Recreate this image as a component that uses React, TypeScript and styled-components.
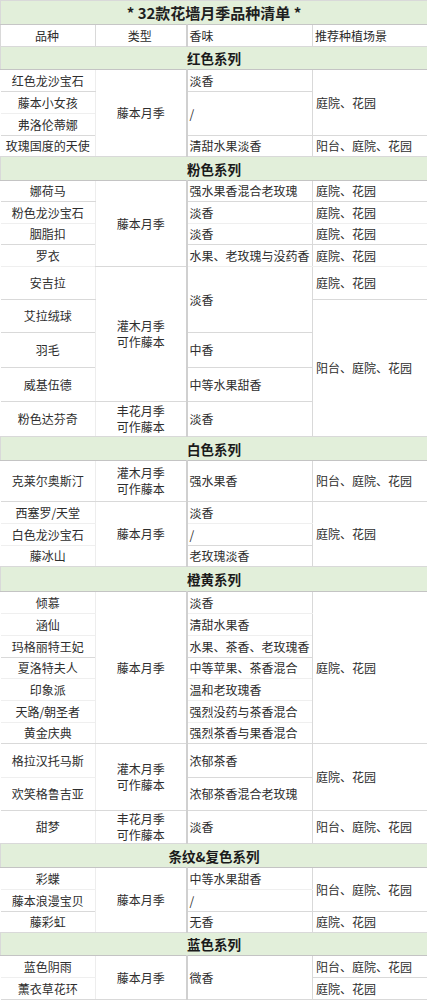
import React from "react";
import styled, { createGlobalStyle } from "styled-components";

const Global = createGlobalStyle`
  html, body { margin: 0; padding: 0; background: #ffffff; }
  body { font-family: "Noto Sans CJK SC", "Noto Sans", sans-serif; }
`;

const Sheet = styled.table`
  width: 427px;
  table-layout: fixed;
  border-collapse: collapse;
  font-size: 12px;
  color: #2e2e2e;
  font-family: "Noto Sans CJK SC", "Noto Sans", sans-serif;
`;

const Row = styled.tr<{ $h: number }>`
  height: ${(p) => p.$h}px;
`;

const baseCell = `
  padding: 0 2px;
  vertical-align: middle;
  white-space: nowrap;
  overflow: hidden;
  line-height: 16px;
  border: 1px solid #d9d9d9;
`;

const TitleCell = styled.td`
  ${baseCell}
  background: #e2efda;
  text-align: center;
  font-size: 15px;
  font-weight: 700;
  color: #1f1f1f;
  border-bottom: 1px solid #c6c6c6;
`;

const HeadCell = styled.td<{ $left?: boolean; $strong?: boolean }>`
  ${baseCell}
  text-align: ${(p) => (p.$left ? "left" : "center")};
  padding-left: ${(p) => (p.$left ? "2px" : "0")};
  ${(p) => (p.$strong ? "border-left: 2px solid #d0d0d0;" : "")}
  color: #2b2b2b;
`;

const SectionCell = styled.td`
  ${baseCell}
  background: #e2efda;
  text-align: center;
  font-size: 13.5px;
  font-weight: 700;
  color: #1a1a1a;
  border-top: 1px solid #c4c4c4;
  border-bottom: 1px solid #c4c4c4;
`;

const NameCell = styled.td<{ $faint?: boolean }>`
  ${baseCell}
  text-align: center;
  border-left: none;
  border-right: 1px solid #ededed;
  ${(p) => (p.$faint ? "border-bottom-color: #efefef;" : "")}
`;

const TypeCell = styled.td`
  ${baseCell}
  text-align: center;
  line-height: 16px;
  border-left: 1px solid #ededed;
`;

const ScentCell = styled.td<{ $faint?: boolean }>`
  ${baseCell}
  text-align: left;
  border-left: 2px solid #d0d0d0;
  ${(p) => (p.$faint ? "border-bottom-color: #efefef;" : "")}
`;

const SceneCell = styled.td<{ $faint?: boolean }>`
  ${baseCell}
  text-align: left;
  padding-left: 3px;
  border-right: none;
  ${(p) => (p.$faint ? "border-bottom-color: #efefef;" : "")}
`;

const TwoLine = ({ a, b }: { a: string; b: string }) => (
  <>
    {a}
    <br />
    {b}
  </>
);

const Section = ({ h, label }: { h: number; label: string }) => (
  <Row $h={h}>
    <SectionCell colSpan={4}>{label}</SectionCell>
  </Row>
);

export default function App() {
  return (
    <>
      <Global />
      <Sheet>
        <colgroup>
          <col style={{ width: 95 }} />
          <col style={{ width: 91 }} />
          <col style={{ width: 126 }} />
          <col style={{ width: 115 }} />
        </colgroup>
        <tbody>
          <Row $h={24}>
            <TitleCell colSpan={4}>* 32款花墙月季品种清单 *</TitleCell>
          </Row>
          <Row $h={22}>
            <HeadCell>品种</HeadCell>
            <HeadCell>类型</HeadCell>
            <HeadCell $left $strong>香味</HeadCell>
            <HeadCell $left>推荐种植场景</HeadCell>
          </Row>

          <Section h={23} label="红色系列" />
          <Row $h={22}>
            <NameCell>红色龙沙宝石</NameCell>
            <TypeCell rowSpan={4}>藤本月季</TypeCell>
            <ScentCell>淡香</ScentCell>
            <SceneCell rowSpan={3}>庭院、花园</SceneCell>
          </Row>
          <Row $h={22}>
            <NameCell $faint>藤本小女孩</NameCell>
            <ScentCell rowSpan={2}>/</ScentCell>
          </Row>
          <Row $h={22}>
            <NameCell>弗洛伦蒂娜</NameCell>
          </Row>
          <Row $h={21}>
            <NameCell>玫瑰国度的天使</NameCell>
            <ScentCell>清甜水果淡香</ScentCell>
            <SceneCell>阳台、庭院、花园</SceneCell>
          </Row>

          <Section h={24} label="粉色系列" />
          <Row $h={21}>
            <NameCell>娜荷马</NameCell>
            <TypeCell rowSpan={4}>藤本月季</TypeCell>
            <ScentCell>强水果香混合老玫瑰</ScentCell>
            <SceneCell>庭院、花园</SceneCell>
          </Row>
          <Row $h={22}>
            <NameCell $faint>粉色龙沙宝石</NameCell>
            <ScentCell $faint>淡香</ScentCell>
            <SceneCell $faint>庭院、花园</SceneCell>
          </Row>
          <Row $h={21}>
            <NameCell>胭脂扣</NameCell>
            <ScentCell>淡香</ScentCell>
            <SceneCell>庭院、花园</SceneCell>
          </Row>
          <Row $h={22}>
            <NameCell $faint>罗衣</NameCell>
            <ScentCell $faint>水果、老玫瑰与没药香</ScentCell>
            <SceneCell $faint>庭院、花园</SceneCell>
          </Row>
          <Row $h={33}>
            <NameCell>安吉拉</NameCell>
            <TypeCell rowSpan={4}>
              <TwoLine a="灌木月季" b="可作藤本" />
            </TypeCell>
            <ScentCell rowSpan={2}>淡香</ScentCell>
            <SceneCell>庭院、花园</SceneCell>
          </Row>
          <Row $h={33}>
            <NameCell>艾拉绒球</NameCell>
            <SceneCell rowSpan={4}>阳台、庭院、花园</SceneCell>
          </Row>
          <Row $h={35}>
            <NameCell>羽毛</NameCell>
            <ScentCell>中香</ScentCell>
          </Row>
          <Row $h={34}>
            <NameCell>威基伍德</NameCell>
            <ScentCell>中等水果甜香</ScentCell>
          </Row>
          <Row $h={35}>
            <NameCell>粉色达芬奇</NameCell>
            <TypeCell>
              <TwoLine a="丰花月季" b="可作藤本" />
            </TypeCell>
            <ScentCell>淡香</ScentCell>
          </Row>

          <Section h={24} label="白色系列" />
          <Row $h={41}>
            <NameCell>克莱尔奥斯汀</NameCell>
            <TypeCell>
              <TwoLine a="灌木月季" b="可作藤本" />
            </TypeCell>
            <ScentCell>强水果香</ScentCell>
            <SceneCell>阳台、庭院、花园</SceneCell>
          </Row>
          <Row $h={22}>
            <NameCell $faint>西塞罗/天堂</NameCell>
            <TypeCell rowSpan={3}>藤本月季</TypeCell>
            <ScentCell $faint>淡香</ScentCell>
            <SceneCell rowSpan={3}>庭院、花园</SceneCell>
          </Row>
          <Row $h={22}>
            <NameCell $faint>白色龙沙宝石</NameCell>
            <ScentCell>/</ScentCell>
          </Row>
          <Row $h={21}>
            <NameCell>藤冰山</NameCell>
            <ScentCell>老玫瑰淡香</ScentCell>
          </Row>

          <Section h={25} label="橙黄系列" />
          <Row $h={22}>
            <NameCell $faint>倾慕</NameCell>
            <TypeCell rowSpan={7}>藤本月季</TypeCell>
            <ScentCell $faint>淡香</ScentCell>
            <SceneCell rowSpan={7}>庭院、花园</SceneCell>
          </Row>
          <Row $h={22}>
            <NameCell $faint>涵仙</NameCell>
            <ScentCell $faint>清甜水果香</ScentCell>
          </Row>
          <Row $h={22}>
            <NameCell>玛格丽特王妃</NameCell>
            <ScentCell>水果、茶香、老玫瑰香</ScentCell>
          </Row>
          <Row $h={21}>
            <NameCell $faint>夏洛特夫人</NameCell>
            <ScentCell $faint>中等苹果、茶香混合</ScentCell>
          </Row>
          <Row $h={22}>
            <NameCell $faint>印象派</NameCell>
            <ScentCell $faint>温和老玫瑰香</ScentCell>
          </Row>
          <Row $h={22}>
            <NameCell $faint>天路/朝圣者</NameCell>
            <ScentCell $faint>强烈没药与茶香混合</ScentCell>
          </Row>
          <Row $h={21}>
            <NameCell>黄金庆典</NameCell>
            <ScentCell>强烈茶香与果香混合</ScentCell>
          </Row>
          <Row $h={34}>
            <NameCell $faint>格拉汉托马斯</NameCell>
            <TypeCell rowSpan={2}>
              <TwoLine a="灌木月季" b="可作藤本" />
            </TypeCell>
            <ScentCell>浓郁茶香</ScentCell>
            <SceneCell rowSpan={2}>庭院、花园</SceneCell>
          </Row>
          <Row $h={33}>
            <NameCell>欢笑格鲁吉亚</NameCell>
            <ScentCell>浓郁茶香混合老玫瑰</ScentCell>
          </Row>
          <Row $h={32}>
            <NameCell>甜梦</NameCell>
            <TypeCell>
              <TwoLine a="丰花月季" b="可作藤本" />
            </TypeCell>
            <ScentCell>淡香</ScentCell>
            <SceneCell>阳台、庭院、花园</SceneCell>
          </Row>

          <Section h={24} label="条纹&复色系列" />
          <Row $h={22}>
            <NameCell $faint>彩蝶</NameCell>
            <TypeCell rowSpan={3}>藤本月季</TypeCell>
            <ScentCell $faint>中等水果甜香</ScentCell>
            <SceneCell rowSpan={2}>阳台、庭院、花园</SceneCell>
          </Row>
          <Row $h={22}>
            <NameCell>藤本浪漫宝贝</NameCell>
            <ScentCell>/</ScentCell>
          </Row>
          <Row $h={21}>
            <NameCell>藤彩虹</NameCell>
            <ScentCell>无香</ScentCell>
            <SceneCell>庭院、花园</SceneCell>
          </Row>

          <Section h={23} label="蓝色系列" />
          <Row $h={22}>
            <NameCell $faint>蓝色阴雨</NameCell>
            <TypeCell rowSpan={2}>藤本月季</TypeCell>
            <ScentCell rowSpan={2}>微香</ScentCell>
            <SceneCell>阳台、庭院、花园</SceneCell>
          </Row>
          <Row $h={22}>
            <NameCell>薰衣草花环</NameCell>
            <SceneCell>庭院、花园</SceneCell>
          </Row>
        </tbody>
      </Sheet>
    </>
  );
}
